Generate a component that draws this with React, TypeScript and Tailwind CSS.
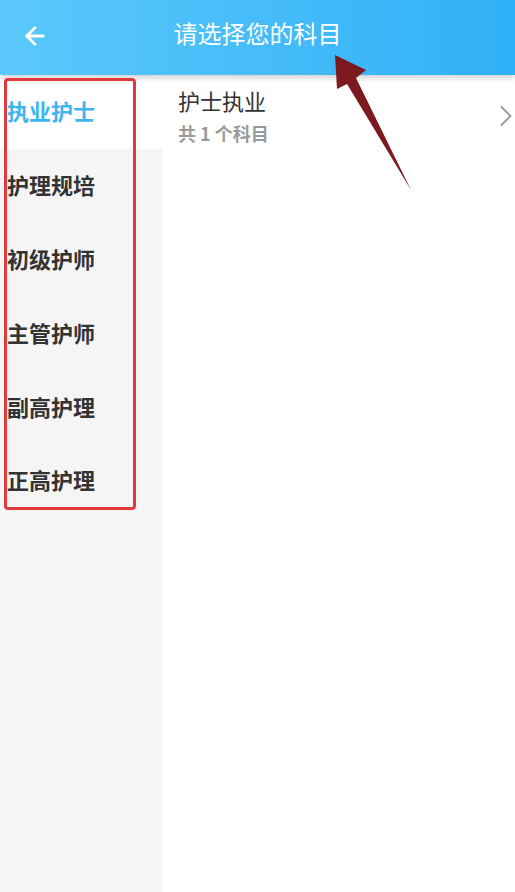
import { ArrowLeft, ChevronRight } from 'lucide-react';

const categories = ['执业护士', '护理规培', '初级护师', '主管护师', '副高护理', '正高护理'];

export default function App() {
  const active = 0;

  return (
    <div
      className="relative w-[515px] h-[892px] overflow-hidden bg-white flex flex-col"
      style={{ fontFamily: '"Noto Sans CJK SC", "Noto Sans", sans-serif' }}
    >
      {/* Header */}
      <div className="relative z-10 h-[75px] shrink-0 flex items-center bg-gradient-to-r from-[#5ac8fa] to-[#2fb0f7] shadow-[0_3px_6px_rgba(0,0,0,0.18)]">
        <button className="w-[72px] h-full flex items-center justify-center text-white">
          <ArrowLeft className="w-[28px] h-[28px] ml-[-2px] mt-[-4px]" strokeWidth={2.4} />
        </button>
        <h1 className="absolute left-0 right-0 text-center text-white text-[24px] leading-none mt-[-9px] pointer-events-none">
          请选择您的科目
        </h1>
      </div>

      <div className="flex flex-1 min-h-0">
        {/* Sidebar */}
        <div className="w-[162px] shrink-0 bg-[#f5f5f5] flex flex-col">
          {categories.map((c, i) => (
            <div
              key={c}
              className={`h-[73.8px] flex items-center pl-[7px] pb-[2px] text-[22px] font-bold ${
                i === active ? 'bg-white text-[#3fb5ee]' : 'text-[#333]'
              }`}
            >
              {c}
            </div>
          ))}
        </div>

        {/* Subject list */}
        <div className="flex-1">
          <div className="flex items-center pl-[16px] pr-[2px] pt-[10px]">
            <div className="flex-1">
              <div className="text-[22px] text-[#333] leading-[30px]">护士执业</div>
              <div className="text-[18px] font-bold text-[#9a9a9a] leading-[24px] mt-[6px]">共 1 个科目</div>
            </div>
            <ChevronRight className="w-[36px] h-[36px] text-[#9e9e9e] mr-[-11px] mt-[2px]" strokeWidth={1.3} />
          </div>
        </div>
      </div>

      {/* Annotation box */}
      <div className="absolute z-20 left-[4px] top-[78px] w-[132px] h-[432px] border-[3px] border-[#e03a3e] rounded-[4px] pointer-events-none" />

      {/* Annotation arrow */}
      <svg className="absolute z-20 left-0 top-0 pointer-events-none" width="515" height="892">
        <polygon points="335,55 366,70 356,78 411,190 347,84 337,89" fill="#7d1a1e" />
      </svg>
    </div>
  );
}
